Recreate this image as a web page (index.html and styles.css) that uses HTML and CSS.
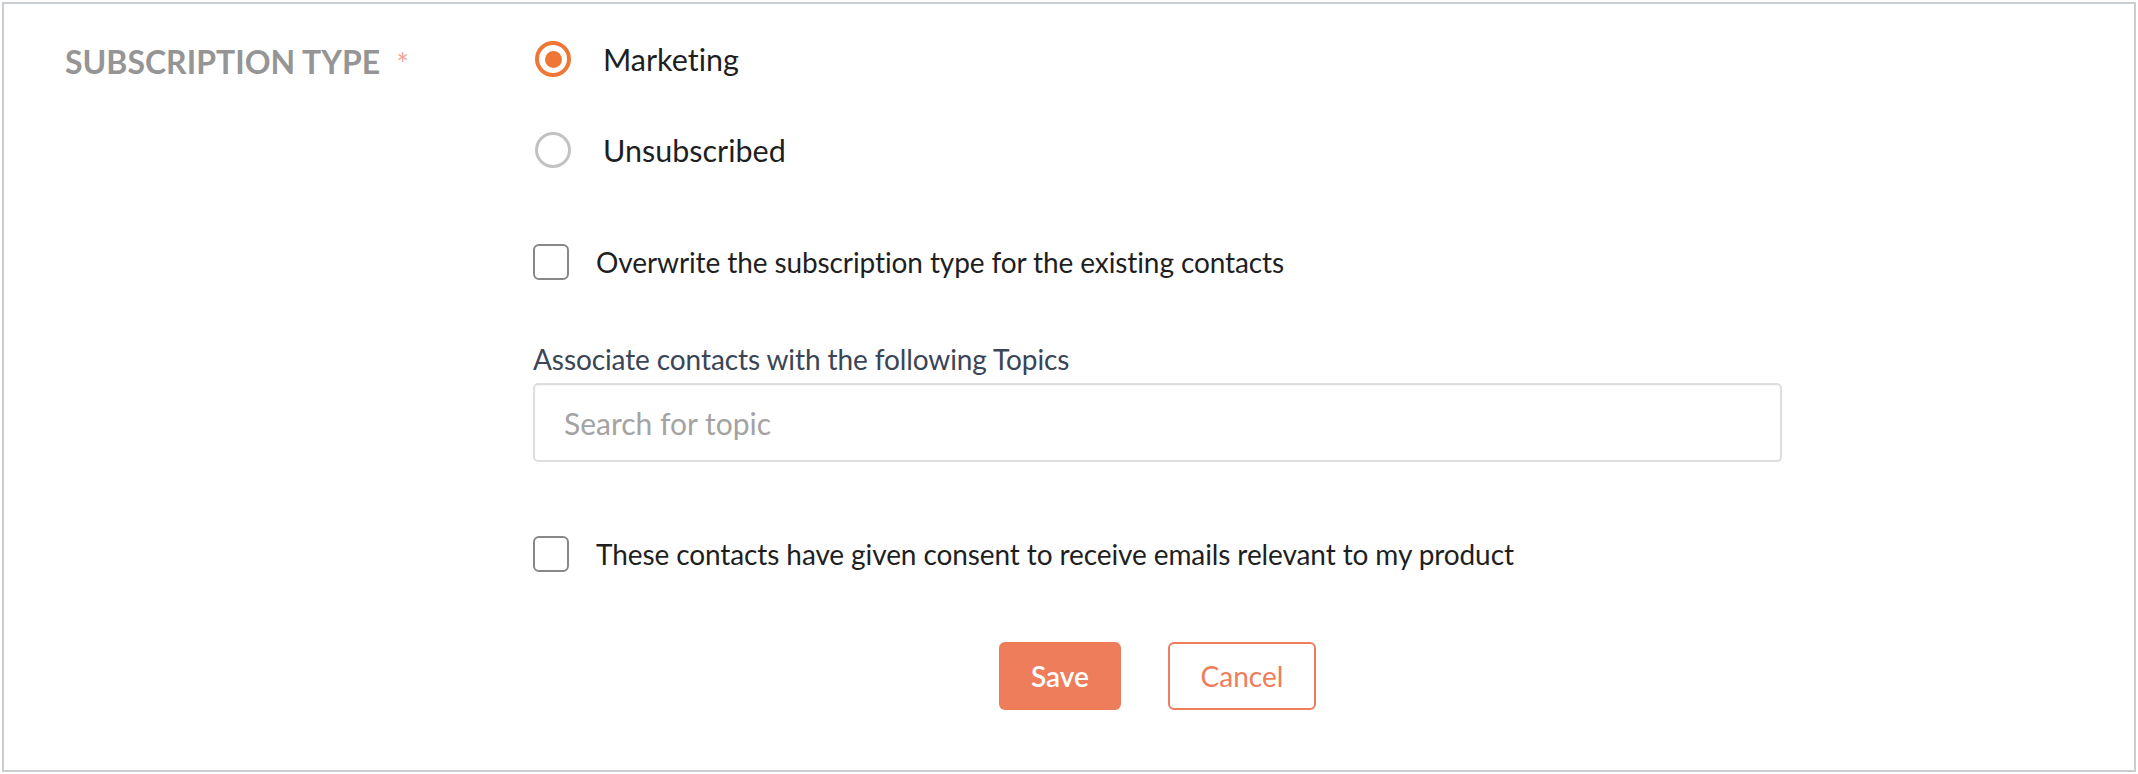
FILE: index.html
```html
<!DOCTYPE html>
<html>
<head>
<meta charset="utf-8">
<link rel="stylesheet" href="styles.css">
</head>
<body>
<div class="panel">
  <div class="label-col">
    <span class="label">SUBSCRIPTION TYPE</span><span class="req">*</span>
  </div>
  <div class="field-col">
    <div class="radio-row">
      <span class="radio checked"></span><span class="opt">Marketing</span>
    </div>
    <div class="radio-row second">
      <span class="radio"></span><span class="opt">Unsubscribed</span>
    </div>
    <div class="check-row first">
      <span class="check"></span><span class="check-text">Overwrite the subscription type for the existing contacts</span>
    </div>
    <div class="topic-label">Associate contacts with the following Topics</div>
    <input class="topic-input" type="text" placeholder="Search for topic">
    <div class="check-row consent">
      <span class="check"></span><span class="check-text">These contacts have given consent to receive emails relevant to my product</span>
    </div>
    <div class="actions">
      <button class="btn save">Save</button>
      <button class="btn cancel">Cancel</button>
    </div>
  </div>
</div>
</body>
</html>
```
FILE: styles.css
```css
* { box-sizing: border-box; }
html, body { margin: 0; padding: 0; background: #ffffff; }
body {
  font-family: Lato, "Open Sans", sans-serif;
  font-variant-ligatures: none;
}

.panel {
  margin: 2px;
  height: 770px;
  border: 2px solid #c9ced3;
  display: flex;
  background: #fff;
}

.label-col {
  width: 529px;
  padding-left: 61px;
  padding-top: 38px;
  height: 80px;
  white-space: nowrap;
  display: flex;
  align-items: flex-start;
}
.label {
  font-size: 32px;
  font-weight: 700;
  color: #959595;
  line-height: 40px;
}
.req {
  margin-left: 16px;
  margin-top: 6px;
  font-size: 30px;
  line-height: 30px;
  color: #f2a59a;
}

.field-col {
  width: 1249px;
  padding-top: 37px;
  display: flex;
  flex-direction: column;
}

.radio-row, .check-row {
  display: flex;
  align-items: center;
  height: 36px;
}
.radio-row.second { margin-top: 55px; }
.check-row.first { margin-top: 76px; }
.check-row.consent { margin-top: 74px; }

.opt {
  font-size: 30.5px;
  color: #1f1f1f;
  white-space: nowrap;
}
.check-text {
  font-size: 28px;
  color: #1f1f1f;
  white-space: nowrap;
  letter-spacing: -0.1px;
}

.radio {
  width: 36px;
  height: 36px;
  border-radius: 50%;
  border: 3px solid #c2c2c2;
  margin-left: 2px;
  margin-right: 32px;
  flex: none;
  position: relative;
}
.radio.checked {
  border: 4px solid #f07636;
}
.radio.checked::after {
  content: "";
  position: absolute;
  left: 50%;
  top: 50%;
  width: 17px;
  height: 17px;
  margin: -8.5px 0 0 -8.5px;
  border-radius: 50%;
  background: #f07636;
}

.check {
  width: 36px;
  height: 36px;
  border: 2px solid #878787;
  border-radius: 6px;
  margin-right: 27px;
  flex: none;
}

.topic-label {
  margin-top: 61px;
  font-size: 28px;
  line-height: 36px;
  color: #3a4555;
  letter-spacing: -0.1px;
}
.topic-input {
  margin-top: 6px;
  width: 100%;
  height: 79px;
  border: 2px solid #dedede;
  border-radius: 5px;
  padding: 0 0 0 29px;
  font-family: Lato, "Open Sans", sans-serif;
  font-size: 30px;
  color: #333;
  outline: none;
  box-shadow: inset 0 1px 2px rgba(0,0,0,0.04);
}
.topic-input::placeholder { color: #a3a3a3; }

.actions {
  margin-top: 70px;
  display: flex;
  justify-content: center;
  gap: 47px;
}
.btn {
  height: 68px;
  border-radius: 6px;
  font-family: Lato, "Open Sans", sans-serif;
  font-size: 28px;
  cursor: pointer;
}
.save {
  width: 122px;
  background: #ee7d5c;
  border: none;
  color: #ffffff;
  font-weight: 600;
}
.cancel {
  width: 148px;
  background: #ffffff;
  border: 2px solid #ee7d5c;
  color: #ee7d5c;
}
```
